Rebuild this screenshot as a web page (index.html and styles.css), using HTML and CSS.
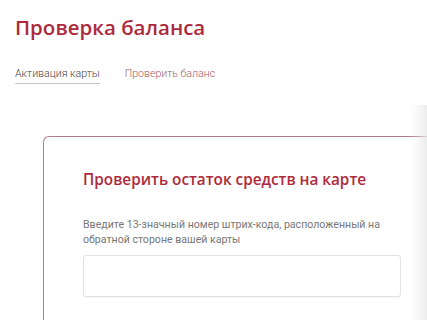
FILE: index.html
```html
<!DOCTYPE html>
<html lang="ru">
<head>
<meta charset="utf-8">
<link rel="stylesheet" href="styles.css">
</head>
<body>
<div class="page">
  <h1 class="title">Проверка баланса</h1>
  <nav class="tabs">
    <a class="tab tab-active">Активация карты</a>
    <a class="tab tab-link">Проверить баланс</a>
  </nav>
  <section class="card">
    <h2 class="card-title">Проверить остаток средств на карте</h2>
    <p class="card-label">Введите 13-значный номер штрих-кода, расположенный на обратной стороне вашей карты</p>
    <div class="input"></div>
  </section>
</div>
<div class="edge-shadow"></div>
</body>
</html>
```
FILE: styles.css
```css
html, body {
  margin: 0;
  padding: 0;
  background: #fff;
  overflow: hidden;
}
body {
  width: 427px;
  height: 320px;
  position: relative;
  font-family: "Open Sans", "Noto Sans", sans-serif;
}
.page {
  padding: 12px 0 0 15px;
}
.title {
  margin: 0;
  font-size: 20.5px;
  font-weight: 600;
  color: #ad2a3c;
  line-height: 30px;
}
.tabs {
  display: flex;
  gap: 25px;
  margin-top: 25px;
  font-family: "Roboto", sans-serif;
  font-size: 10.6px;
  font-weight: 300;
}
.tab {
  line-height: 14px;
  padding-bottom: 2px;
}
.tab-active {
  color: #444;
  border-bottom: 1px solid #c4c4c4;
}
.tab-link {
  color: #a25a64;
}
.card {
  margin: 52px 0 0 28px;
  width: 384px;
  height: 200px;
  border: 1px solid #ad8088;
  border-right: none;
  border-radius: 6px 0 0 0;
  padding: 30px 0 0 39px;
  box-sizing: border-box;
}
.card-title {
  margin: 0;
  font-size: 15.3px;
  font-weight: 600;
  color: #ad2a3c;
  line-height: 24px;
}
.card-label {
  margin: 26px 0 0;
  width: 320px;
  font-family: "Roboto", sans-serif;
  font-weight: 400;
  font-size: 10.6px;
  line-height: 15px;
  color: #777;
}
.input {
  margin-top: 8px;
  width: 318px;
  height: 42px;
  border: 1px solid #e2e2e2;
  border-radius: 3px;
  box-sizing: border-box;
  box-shadow: 0 1px 1px rgba(0,0,0,0.04);
}
.edge-shadow {
  position: absolute;
  top: 105px;
  right: 0;
  width: 16px;
  height: 215px;
  background: linear-gradient(to right, rgba(235,235,235,0), rgba(232,232,232,0.8));
}
```
